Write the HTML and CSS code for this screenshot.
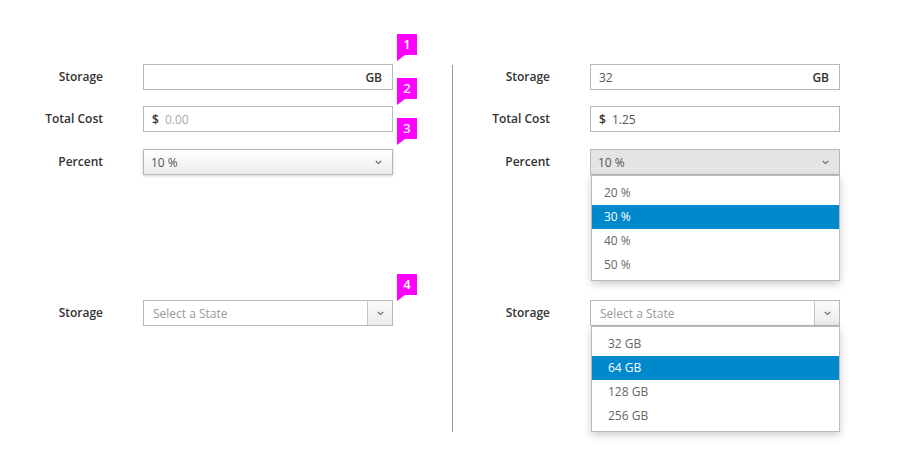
FILE: index.html
```html
<!DOCTYPE html>
<html lang="en">
<head>
<meta charset="utf-8">
<title>Form controls</title>
<link rel="stylesheet" href="styles.css">
</head>
<body>
<div class="page">
  <section class="panel panel-left">
    <div class="row row-a">
      <span class="label">Storage</span>
      <div class="field">
        <div class="input"><span class="value"></span><span class="unit">GB</span></div>
        <span class="badge badge-1">1</span>
      </div>
    </div>
    <div class="row row-b">
      <span class="label">Total Cost</span>
      <div class="field">
        <div class="input"><span class="prefix">$</span><span class="placeholder">0.00</span></div>
        <span class="badge badge-2">2</span>
      </div>
    </div>
    <div class="row row-c">
      <span class="label">Percent</span>
      <div class="field">
        <div class="select select-closed"><span class="value">10 %</span>
          <svg class="chev" width="7" height="5" viewBox="0 0 7 5"><polyline points="0.8,1 3.5,3.6 6.2,1" fill="none" stroke="#666" stroke-width="1.1"/></svg>
        </div>
        <span class="badge badge-3">3</span>
      </div>
    </div>
    <div class="row row-d">
      <span class="label">Storage</span>
      <div class="field">
        <div class="combo"><span class="placeholder combo-text">Select a State</span>
          <span class="combo-btn"><svg class="chev" width="7" height="5" viewBox="0 0 7 5"><polyline points="0.8,1 3.5,3.6 6.2,1" fill="none" stroke="#666" stroke-width="1.1"/></svg></span>
        </div>
        <span class="badge badge-4">4</span>
      </div>
    </div>
  </section>
  <div class="divider"></div>
  <section class="panel panel-right">
    <div class="row row-a">
      <span class="label">Storage</span>
      <div class="field">
        <div class="input"><span class="value">32</span><span class="unit">GB</span></div>
      </div>
    </div>
    <div class="row row-b">
      <span class="label">Total Cost</span>
      <div class="field">
        <div class="input"><span class="prefix">$</span><span class="value">1.25</span></div>
      </div>
    </div>
    <div class="row row-c">
      <span class="label">Percent</span>
      <div class="field">
        <div class="select select-open"><span class="value">10 %</span>
          <svg class="chev" width="7" height="5" viewBox="0 0 7 5"><polyline points="0.8,1 3.5,3.6 6.2,1" fill="none" stroke="#666" stroke-width="1.1"/></svg>
        </div>
        <ul class="menu menu-percent">
          <li>20 %</li>
          <li class="active">30 %</li>
          <li>40 %</li>
          <li>50 %</li>
        </ul>
      </div>
    </div>
    <div class="row row-d">
      <span class="label">Storage</span>
      <div class="field">
        <div class="combo"><span class="placeholder combo-text">Select a State</span>
          <span class="combo-btn"><svg class="chev" width="7" height="5" viewBox="0 0 7 5"><polyline points="0.8,1 3.5,3.6 6.2,1" fill="none" stroke="#666" stroke-width="1.1"/></svg></span>
        </div>
        <ul class="menu menu-storage">
          <li>32 GB</li>
          <li class="active">64 GB</li>
          <li>128 GB</li>
          <li>256 GB</li>
        </ul>
      </div>
    </div>
  </section>
</div>
</body>
</html>
```

FILE: styles.css
```css
* { box-sizing: border-box; }
html, body { margin: 0; padding: 0; background: #fff; }
body {
  font-family: "Open Sans", "Noto Sans", sans-serif;
  font-size: 12px;
  color: #333;
  width: 900px;
  height: 472px;
  overflow: hidden;
}
.page {
  display: flex;
  align-items: flex-start;
  padding-top: 64px;
}
.panel {
  display: flex;
  flex-direction: column;
}
.panel-left { width: 452px; padding-left: 7px; }
.panel-right { padding-left: 1px; }
.divider {
  width: 1px;
  height: 367px;
  margin-top: 1px;
  background: #999;
}
.row {
  display: grid;
  grid-template-columns: 96px 250px;
  column-gap: 40px;
  align-items: start;
}
.row-b { margin-top: 16px; }
.row-c { margin-top: 17px; }
.row-d { margin-top: 125px; }
.label {
  text-align: right;
  font-weight: 600;
  line-height: 24px;
  padding-top: 1px;
  color: #333;
  white-space: nowrap;
}
.field { position: relative; }
.input, .select, .combo {
  height: 26px;
  border: 1px solid #b8b8b8;
  background: #fff;
  display: flex;
  align-items: center;
  line-height: 22px;
  padding-top: 2px;
}
.input { padding-left: 8px; padding-right: 10px; }
.value { color: #555; flex: 1; }
.unit { font-weight: 600; color: #333; }
.prefix { font-weight: 600; color: #333; margin-right: 6px; }
.placeholder { color: #aaa; }
.select { padding-left: 7px; padding-right: 10px; }
.select .chev { margin-top: -2px; }
.select-closed {
  background: linear-gradient(#ffffff, #ececec);
  box-shadow: 0 1px 3px rgba(0, 0, 0, 0.18);
}
.select-open { background: #e4e4e4; }
.chev { display: block; flex: none; }
.combo { padding-left: 9px; padding-top: 0; line-height: 24px; }
.combo-text { flex: 1; color: #999; padding-top: 2px; line-height: 22px; }
.combo-btn {
  width: 25px;
  height: 24px;
  border-left: 1px solid #c4c4c4;
  background: linear-gradient(#fbfbfb, #ebebeb);
  display: flex;
  align-items: center;
  justify-content: center;
}
.menu {
  position: absolute;
  left: 1px;
  right: 0;
  top: 26px;
  margin: 0;
  list-style: none;
  padding: 5px 0 3px;
  background: #fff;
  border: 1px solid #bbb;
  box-shadow: 0 3px 8px rgba(0, 0, 0, 0.2);
  z-index: 2;
}
.menu li {
  height: 24px;
  line-height: 24px;
  color: #666;
}
.menu-percent li { padding-left: 12px; }
.menu-storage li { padding-left: 16px; }
.menu li.active { background: #0088cc; color: #fff; }
.badge {
  position: absolute;
  left: calc(100% + 4px);
  width: 20px;
  height: 21px;
  background: #ff00ff;
  color: #fff;
  font-weight: 600;
  font-size: 13px;
  line-height: 21px;
  text-align: center;
}
.badge::after {
  content: "";
  position: absolute;
  left: 0;
  top: 100%;
  border-top: 6px solid #ff00ff;
  border-right: 8px solid transparent;
}
.badge-1 { top: -30px; }
.badge-2 { top: -28px; }
.badge-3 { top: -31px; }
.badge-4 { top: -26px; }
```
